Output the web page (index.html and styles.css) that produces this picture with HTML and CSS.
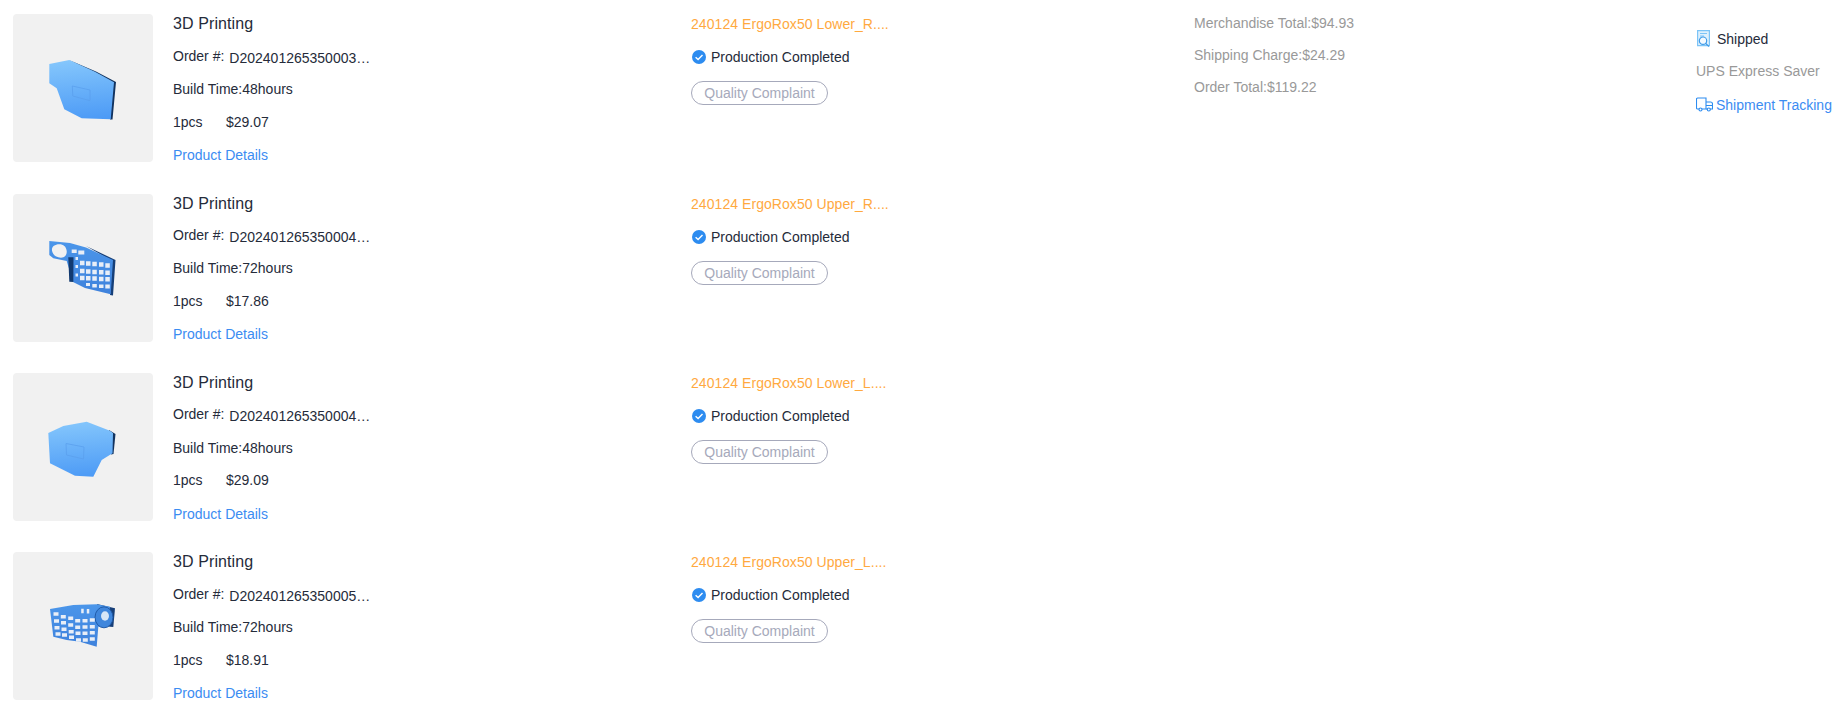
FILE: index.html
```html
<!DOCTYPE html>
<html lang="en">
<head>
<meta charset="utf-8">
<title>Order</title>
<link rel="stylesheet" href="styles.css">
</head>
<body>
<svg class="defs" width="0" height="0" aria-hidden="true">
  <defs>
    <linearGradient id="plate" x1="0.4" y1="0" x2="0.5" y2="1">
      <stop offset="0" stop-color="#84c6fc"/>
      <stop offset="1" stop-color="#4d9bf6"/>
    </linearGradient>
    <linearGradient id="frame" x1="0" y1="0" x2="0" y2="1">
      <stop offset="0" stop-color="#4b96ea"/>
      <stop offset="1" stop-color="#3f82dc"/>
    </linearGradient>
    <symbol id="check" viewBox="0 0 14 14">
      <circle cx="7" cy="7" r="7" fill="#2d8cf0"/>
      <path d="M3.600 7.200 6.100 9.600 10.500 5" fill="none" stroke="#fff" stroke-width="1.400"/>
    </symbol>
  </defs>
</svg>
<main class="order">
  <section class="items">
    <article class="item">
      <div class="thumb">
        <svg class="part" viewBox="0 0 140 148">
          <path d="M56 46 83 57.500 103 68 99.500 105.500 97 105.500 100 69Z" fill="#12335f"/>
          <path d="M36.300 50 56.300 46 82 57.700 101 68.300 97.700 105.300 68.700 104.300 51.300 95.300 43.700 74.300 36.300 69.300Z" fill="url(#plate)"/>
          <path d="M59.300 72 77 76 77 86.700 59.800 82Z" fill="none" stroke="#5a9fee" stroke-width=".8"/>
        </svg>
      </div>
      <div class="info">
        <h3 class="name">3D Printing</h3>
        <div class="line"><span>Order #:</span><span class="code">D202401265350003…</span></div>
        <div class="line">Build Time:48hours</div>
        <div class="line"><span class="qty">1pcs</span><span>$29.07</span></div>
        <a class="details" href="#">Product Details</a>
      </div>
      <div class="file">
        <div class="file-name">240124 ErgoRox50 Lower_R....</div>
        <div class="status"><svg class="status-icon"><use href="#check"/></svg>Production Completed</div>
        <button class="complaint" type="button">Quality Complaint</button>
      </div>
    </article>

    <article class="item">
      <div class="thumb">
        <svg class="part" viewBox="0 0 140 148">
          <path d="M73 52 102.500 66 100 101.500 97 101 99 67Z" fill="#163f78"/>
          <path fill-rule="evenodd" d="M36.300 47 57 49 73 53.500 100 66 97.700 100.300 72 94 60 88 53.700 67 40.300 64.300 36.300 61ZM46.300 50.300C41.500 50.300 38.500 53 39 56.500 39.500 61 44 63.700 48 63.700 52 63.700 54 60.500 53.700 57 53 52.500 50.500 50.300 46.300 50.300Z" fill="url(#frame)"/>
          <path d="M55.300 63.300 60.500 63.300 60.300 88 56.300 87.700Z" fill="#123a70"/>
          <g fill="#e8eef7">
            <path d="M58.700 55.500h5V59h-5zM65.300 56.500h6v4h-6zM62.500 63h2.500v3h-2.500zM62.500 71h2.500v3h-2.500zM62.500 79.500h2.500v3h-2.500z"/>
            <path d="M67 66.700h4.500v4.500H67zM73 67.200h4.500v4.500H73zM79.300 67.800h4.500v4.500h-4.500zM86 68.200h4.500v4.500H86zM92.300 69.200h4.500v4.500h-4.500z"/>
            <path d="M67 74.700h4.500v4.500H67zM73 75.200h4.500v4.500H73zM79.300 75.800h4.500v4.500h-4.500zM86 76h4.500v4.500H86zM92.300 76.500h4.500V81h-4.500z"/>
            <path d="M67 81.700h4.500v4.500H67zM73 82h4.500v4.500H73zM79.300 82.300h4.500v4.500h-4.500zM86 82.700h4.500v4.500H86zM92.300 83h4.500v4.500h-4.500z"/>
            <path d="M73 89h4v3h-4zM79.300 90h4.500v3.500h-4.500zM86 90.500h4.500v3.500H86zM92.300 90.500h4.500v4h-4.500z"/>
          </g>
        </svg>
      </div>
      <div class="info">
        <h3 class="name">3D Printing</h3>
        <div class="line"><span>Order #:</span><span class="code">D202401265350004…</span></div>
        <div class="line">Build Time:72hours</div>
        <div class="line"><span class="qty">1pcs</span><span>$17.86</span></div>
        <a class="details" href="#">Product Details</a>
      </div>
      <div class="file">
        <div class="file-name">240124 ErgoRox50 Upper_R....</div>
        <div class="status"><svg class="status-icon"><use href="#check"/></svg>Production Completed</div>
        <button class="complaint" type="button">Quality Complaint</button>
      </div>
    </article>

    <article class="item">
      <div class="thumb">
        <svg class="part" viewBox="0 0 140 148">
          <path d="M96 57 102.500 61 100.500 81 98 81.500Z" fill="#12335f"/>
          <path d="M35.300 60 50.300 53 73.700 48.700 97 57.700 100 60 99.500 80.300 88.700 87 80.300 103.700 62 102.700 37 90.300Z" fill="url(#plate)"/>
          <path d="M53 70.500 71 74 70.500 86 53.500 82Z" fill="none" stroke="#5a9fee" stroke-width=".8"/>
        </svg>
      </div>
      <div class="info">
        <h3 class="name">3D Printing</h3>
        <div class="line"><span>Order #:</span><span class="code">D202401265350004…</span></div>
        <div class="line">Build Time:48hours</div>
        <div class="line"><span class="qty">1pcs</span><span>$29.09</span></div>
        <a class="details" href="#">Product Details</a>
      </div>
      <div class="file">
        <div class="file-name">240124 ErgoRox50 Lower_L....</div>
        <div class="status"><svg class="status-icon"><use href="#check"/></svg>Production Completed</div>
        <button class="complaint" type="button">Quality Complaint</button>
      </div>
    </article>

    <article class="item">
      <div class="thumb">
        <svg class="part" viewBox="0 0 140 148">
          <path d="M84 52 102 56.300 100.300 75 88 74Z" fill="#173f78"/>
          <path d="M37 57 60.300 53 83.700 52.300 97 54.700 95 74.700 85.300 74.700 83.700 94.700 67 89.700 53.700 88 40.300 84.700Z" fill="url(#frame)"/>
          <ellipse cx="91" cy="65.300" rx="9" ry="10.500" fill="#3f86dc" stroke="#1f5aa8" stroke-width="1"/>
          <ellipse cx="92" cy="64" rx="4" ry="4.700" fill="#d8e6f6"/>
          <g fill="#e8eef7">
            <path d="M68.200 56.700h2.500v4.500h-2.500zM73.800 57h2.500v4.500h-2.500z"/>
            <path d="M40.500 60.200h5v3.500h-5zM47.800 63h5v3.500h-5zM55.200 64.500h5V68h-5zM62.200 67h5v3.500h-5zM69.500 67h5v3.500h-5zM76.800 66.200h5v3.500h-5z"/>
            <path d="M41 67.200h5v3.500h-5zM48 69h5v3.500h-5zM55.200 71.200h5v3.500h-5zM62.200 73.500h5V77h-5zM69.500 73.200h5v3.500h-5zM76.800 73h5v3.500h-5z"/>
            <path d="M41.500 74h5v3.500h-5zM48.500 75.500h5V79h-5zM55.700 78h5v3.500h-5zM62.500 79.500h5V83h-5zM69.500 79.500h5V83h-5zM76.800 79h5v3.500h-5z"/>
            <path d="M42.500 80.200h5v3.500h-5zM49 81.200h5v3.500h-5zM56 83.500h5V87h-5zM63 86.200h5v3.500h-5zM69.800 86.200h5v3.500h-5zM76.800 85.200h5v3.500h-5z"/>
          </g>
        </svg>
      </div>
      <div class="info">
        <h3 class="name">3D Printing</h3>
        <div class="line"><span>Order #:</span><span class="code">D202401265350005…</span></div>
        <div class="line">Build Time:72hours</div>
        <div class="line"><span class="qty">1pcs</span><span>$18.91</span></div>
        <a class="details" href="#">Product Details</a>
      </div>
      <div class="file">
        <div class="file-name">240124 ErgoRox50 Upper_L....</div>
        <div class="status"><svg class="status-icon"><use href="#check"/></svg>Production Completed</div>
        <button class="complaint" type="button">Quality Complaint</button>
      </div>
    </article>
  </section>

  <section class="summary">
    <div class="summary-line">Merchandise Total:$94.93</div>
    <div class="summary-line">Shipping Charge:$24.29</div>
    <div class="summary-line">Order Total:$119.22</div>
  </section>

  <section class="shipping">
    <div class="ship-state">
      <svg class="ship-icon" viewBox="0 0 15 17" fill="none" stroke-width="1.200">
        <path d="M.6.6h11.800v15H.6z" fill="#dff0fc" stroke="#7cc4f7"/>
        <path d="M3 3.500h7M3 6h4" stroke="#7cc4f7"/>
        <circle cx="6" cy="10.700" r="3.700" fill="#f4faff" stroke="#3f9be8"/>
        <path d="M8.700 13.500 12 16.500" stroke="#3f9be8"/>
      </svg>
      <span>Shipped</span>
    </div>
    <div class="ship-method">UPS Express Saver</div>
    <a class="ship-track" href="#">
      <svg class="truck-icon" viewBox="0 0 17 15" fill="none" stroke="#2d8cf0" stroke-width="1.100">
        <path d="M3 12H1.500a1 1 0 0 1-1-1V2a1 1 0 0 1 1-1H10v11H6"/>
        <path d="M10 5h4.500a2 2 0 0 1 2 2v5H14M11.500 12H10M10 8.500h6.500"/>
        <circle cx="4.500" cy="12.500" r="1.500"/>
        <circle cx="12.800" cy="12.500" r="1.500"/>
      </svg>
      <span>Shipment Tracking</span>
    </a>
  </section>
</main>
</body>
</html>
```
FILE: styles.css
```css
* {
  box-sizing: border-box;
}

html,
body {
  margin: 0;
  padding: 0;
  background: #fff;
}

body {
  font-family: "Liberation Sans", Arial, sans-serif;
  font-size: 14px;
  color: #252b3a;
  overflow: hidden;
}

.defs {
  display: block;
  height: 0;
}

.order {
  display: flex;
  width: 1842px;
  height: 712px;
}

.items {
  flex: 0 0 1194px;
  padding: 14.33px 0 0 13px;
}

.item {
  display: flex;
  height: 179.33px;
}

.thumb {
  flex: 0 0 140px;
  height: 148px;
  background: #f1f1f1;
  border-radius: 4px;
}

.part {
  display: block;
  width: 140px;
  height: 148px;
  filter: blur(0.4px);
}

.info {
  flex: 0 0 538px;
  padding: 0 0 0 20px;
  margin-top: -6.1px;
}

.name {
  margin: 0 0 -1px;
  font-size: 16px;
  font-weight: 400;
  line-height: 32.6px;
  letter-spacing: 0.1px;
}

.line {
  display: flex;
  height: 32.6px;
  line-height: 32.6px;
}

.name + .line {
  margin-bottom: 0.7px;
}

.code {
  margin: 2px 0 0 5px;
  white-space: nowrap;
}

.qty {
  width: 53px;
}

.details {
  display: block;
  margin-top: 0.6px;
  line-height: 32.6px;
  color: #3b8cf2;
  text-decoration: none;
}

.file {
  margin-top: -1px;
}

.file-name {
  line-height: 22px;
  letter-spacing: 0.06px;
  color: #ffa93f;
}

.status {
  display: flex;
  align-items: center;
  gap: 5px;
  margin-top: 12px;
  line-height: 20px;
  padding-left: 1px;
}

.status-icon {
  width: 14px;
  height: 14px;
}

.complaint {
  display: block;
  width: 137px;
  height: 24px;
  margin-top: 14px;
  padding: 0;
  border: 1px solid #a6a9bb;
  border-radius: 12px;
  background: #fff;
  font: inherit;
  color: #a6a9bb;
}

.summary {
  flex: 0 0 502px;
  padding-top: 7px;
  color: #999;
}

.summary-line {
  line-height: 32px;
}

.shipping {
  flex: 1;
  padding: 22px 0 0 0;
}

.ship-state {
  display: flex;
  align-items: center;
  gap: 5px;
  height: 33px;
  padding-left: 1px;
}

.ship-icon {
  width: 15px;
  height: 17px;
}

.ship-method {
  line-height: 33px;
  color: #999;
}

.ship-track {
  display: flex;
  align-items: center;
  gap: 3px;
  height: 33px;
  color: #3b8cf2;
  text-decoration: none;
  white-space: nowrap;
}

.truck-icon {
  width: 17px;
  height: 15px;
}
```
